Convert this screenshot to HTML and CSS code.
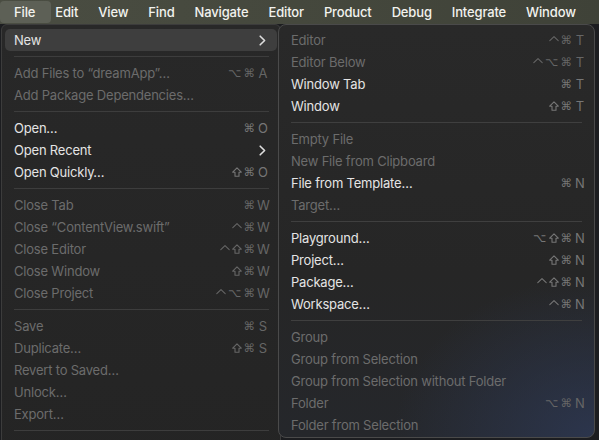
FILE: index.html
```html
<!DOCTYPE html>
<html>
<head>
<meta charset="utf-8">
<link rel="stylesheet" href="styles.css">
</head>
<body>
<div class="menubar">
  <span class="mb-item active">File</span>
  <span class="mb-item">Edit</span>
  <span class="mb-item">View</span>
  <span class="mb-item">Find</span>
  <span class="mb-item">Navigate</span>
  <span class="mb-item">Editor</span>
  <span class="mb-item">Product</span>
  <span class="mb-item">Debug</span>
  <span class="mb-item">Integrate</span>
  <span class="mb-item">Window</span>
</div>
<div class="stage">
  <div class="menu main">
    <div class="row sel"><span class="label">New</span><svg class="chev" viewBox="0 0 7 11"><path d="M1.2 1.2 L5.6 5.5 L1.2 9.8"/></svg></div>
    <div class="sep"></div>
    <div class="row dis"><span class="label">Add Files to “dreamApp”…</span><span class="sc"><span class="m">⌥</span><span class="m">⌘</span><span class="key">A</span></span></div>
    <div class="row dis"><span class="label">Add Package Dependencies…</span></div>
    <div class="sep"></div>
    <div class="row"><span class="label">Open…</span><span class="sc"><span class="m">⌘</span><span class="key">O</span></span></div>
    <div class="row"><span class="label">Open Recent</span><svg class="chev" viewBox="0 0 7 11"><path d="M1.2 1.2 L5.6 5.5 L1.2 9.8"/></svg></div>
    <div class="row"><span class="label">Open Quickly…</span><span class="sc"><svg class="ic" viewBox="0 0 10 10"><path d="M5 0.8 L9.3 5.2 H7 V9.2 H3 V5.2 H0.7 Z"/></svg><span class="m">⌘</span><span class="key">O</span></span></div>
    <div class="sep"></div>
    <div class="row dis"><span class="label">Close Tab</span><span class="sc"><span class="m">⌘</span><span class="key">W</span></span></div>
    <div class="row dis"><span class="label">Close “ContentView.swift”</span><span class="sc"><svg class="ic" viewBox="0 0 10 10"><path d="M0.8 5.6 L5 1.6 L9.2 5.6"/></svg><span class="m">⌘</span><span class="key">W</span></span></div>
    <div class="row dis"><span class="label">Close Editor</span><span class="sc"><svg class="ic" viewBox="0 0 10 10"><path d="M0.8 5.6 L5 1.6 L9.2 5.6"/></svg><svg class="ic" viewBox="0 0 10 10"><path d="M5 0.8 L9.3 5.2 H7 V9.2 H3 V5.2 H0.7 Z"/></svg><span class="m">⌘</span><span class="key">W</span></span></div>
    <div class="row dis"><span class="label">Close Window</span><span class="sc"><svg class="ic" viewBox="0 0 10 10"><path d="M5 0.8 L9.3 5.2 H7 V9.2 H3 V5.2 H0.7 Z"/></svg><span class="m">⌘</span><span class="key">W</span></span></div>
    <div class="row dis"><span class="label">Close Project</span><span class="sc"><svg class="ic" viewBox="0 0 10 10"><path d="M0.8 5.6 L5 1.6 L9.2 5.6"/></svg><span class="m">⌥</span><span class="m">⌘</span><span class="key">W</span></span></div>
    <div class="sep"></div>
    <div class="row dis"><span class="label">Save</span><span class="sc"><span class="m">⌘</span><span class="key">S</span></span></div>
    <div class="row dis"><span class="label">Duplicate…</span><span class="sc"><svg class="ic" viewBox="0 0 10 10"><path d="M5 0.8 L9.3 5.2 H7 V9.2 H3 V5.2 H0.7 Z"/></svg><span class="m">⌘</span><span class="key">S</span></span></div>
    <div class="row dis"><span class="label">Revert to Saved…</span></div>
    <div class="row dis"><span class="label">Unlock…</span></div>
    <div class="row dis"><span class="label">Export…</span></div>
    <div class="sep"></div>
  </div>
  <div class="menu sub">
    <div class="row dis"><span class="label">Editor</span><span class="sc"><svg class="ic" viewBox="0 0 10 10"><path d="M0.8 5.6 L5 1.6 L9.2 5.6"/></svg><span class="m">⌘</span><span class="key">T</span></span></div>
    <div class="row dis"><span class="label">Editor Below</span><span class="sc"><svg class="ic" viewBox="0 0 10 10"><path d="M0.8 5.6 L5 1.6 L9.2 5.6"/></svg><span class="m">⌥</span><span class="m">⌘</span><span class="key">T</span></span></div>
    <div class="row"><span class="label">Window Tab</span><span class="sc"><span class="m">⌘</span><span class="key">T</span></span></div>
    <div class="row"><span class="label">Window</span><span class="sc"><svg class="ic" viewBox="0 0 10 10"><path d="M5 0.8 L9.3 5.2 H7 V9.2 H3 V5.2 H0.7 Z"/></svg><span class="m">⌘</span><span class="key">T</span></span></div>
    <div class="sep"></div>
    <div class="row dis"><span class="label">Empty File</span></div>
    <div class="row dis"><span class="label">New File from Clipboard</span></div>
    <div class="row"><span class="label">File from Template…</span><span class="sc"><span class="m">⌘</span><span class="key">N</span></span></div>
    <div class="row dis"><span class="label">Target…</span></div>
    <div class="sep"></div>
    <div class="row"><span class="label">Playground…</span><span class="sc"><span class="m">⌥</span><svg class="ic" viewBox="0 0 10 10"><path d="M5 0.8 L9.3 5.2 H7 V9.2 H3 V5.2 H0.7 Z"/></svg><span class="m">⌘</span><span class="key">N</span></span></div>
    <div class="row"><span class="label">Project…</span><span class="sc"><svg class="ic" viewBox="0 0 10 10"><path d="M5 0.8 L9.3 5.2 H7 V9.2 H3 V5.2 H0.7 Z"/></svg><span class="m">⌘</span><span class="key">N</span></span></div>
    <div class="row"><span class="label">Package…</span><span class="sc"><svg class="ic" viewBox="0 0 10 10"><path d="M0.8 5.6 L5 1.6 L9.2 5.6"/></svg><svg class="ic" viewBox="0 0 10 10"><path d="M5 0.8 L9.3 5.2 H7 V9.2 H3 V5.2 H0.7 Z"/></svg><span class="m">⌘</span><span class="key">N</span></span></div>
    <div class="row"><span class="label">Workspace…</span><span class="sc"><svg class="ic" viewBox="0 0 10 10"><path d="M0.8 5.6 L5 1.6 L9.2 5.6"/></svg><span class="m">⌘</span><span class="key">N</span></span></div>
    <div class="sep"></div>
    <div class="row dis"><span class="label">Group</span></div>
    <div class="row dis"><span class="label">Group from Selection</span></div>
    <div class="row dis"><span class="label">Group from Selection without Folder</span></div>
    <div class="row dis"><span class="label">Folder</span><span class="sc"><span class="m">⌥</span><span class="m">⌘</span><span class="key">N</span></span></div>
    <div class="row dis"><span class="label">Folder from Selection</span></div>
  </div>
</div>
</body>
</html>
```
FILE: styles.css
```css
html, body {
  margin: 0;
  padding: 0;
  width: 599px;
  height: 440px;
  overflow: hidden;
  background: #1c1d20;
  font-family: Inter, "Noto Sans", "DejaVu Sans", sans-serif;
}

.menubar {
  height: 24px;
  display: flex;
  align-items: center;
  gap: 20px;
  padding-left: 14px;
  background: linear-gradient(90deg, #4a4d42 0%, #45483d 50%, #3f4238 100%);
  color: #f2f2ee;
  font-size: 13px;
  font-weight: 500;
  letter-spacing: -0.15px;
  box-sizing: border-box;
}

.mb-item {
  line-height: 22px;
  white-space: nowrap;
}

.mb-item.active {
  padding: 0 16px 0 14px;
  margin: 0 -16px 0 -14px;
  background: #5d6056;
  border-radius: 4px;
}

.stage {
  display: flex;
  align-items: flex-start;
}

.menu {
  box-sizing: border-box;
  border: 1px solid #4a4a4a;
  font-size: 13px;
  letter-spacing: -0.2px;
}

.main {
  width: 280px;
  margin-left: 1px;
  padding: 4px 3px 60px;
  border-radius: 6px 6px 0 0;
  background: linear-gradient(180deg, #282828 0%, #242424 100%);
  border-color: #3c3c3c;
}

.sub {
  position: relative;
  z-index: 2;
  width: 317px;
  margin-left: -3px;
  padding: 4px 3px 1px;
  border-radius: 8px;
  border-color: #4a4a4a;
  background:
    radial-gradient(ellipse 200px 160px at 100% 100%, rgba(46, 58, 88, 0.75), rgba(46, 58, 88, 0) 100%),
    linear-gradient(180deg, #292929 0%, #262626 60%, #25272b 100%);
}

.row {
  height: 22px;
  display: flex;
  align-items: center;
  justify-content: space-between;
  padding: 0 8px 0 9px;
  color: #e4e4e4;
  white-space: nowrap;
  border-radius: 5px;
}

.sub .row {
  padding: 0 5px 0 9px;
}

.row.sel {
  background: #3e3e3e;
}

.row.dis {
  color: #6c6c6c;
}

.sep {
  height: 1px;
  margin: 5px 8px 5px 9px;
  background: #3d3d3d;
}

.sub .sep {
  margin: 5px 9px 5px 9px;
  background: #3f3f3f;
}

.chev {
  width: 7px;
  height: 11px;
  margin-right: 3px;
  fill: none;
  stroke: #dedede;
  stroke-width: 1.6;
  stroke-linecap: round;
  stroke-linejoin: round;
}

.sc {
  display: flex;
  align-items: center;
  gap: 2px;
  color: #767676;
}

.row.dis .sc {
  color: #666666;
}

.m {
  font-family: "DejaVu Sans", sans-serif;
  font-size: 11.5px;
  letter-spacing: 0;
}

.ic {
  width: 10px;
  height: 10px;
  fill: none;
  stroke: currentColor;
  stroke-width: 1.1;
  stroke-linejoin: round;
  stroke-linecap: round;
}

.key {
  width: 12px;
  text-align: center;
  font-size: 13px;
  letter-spacing: 0;
}
```
